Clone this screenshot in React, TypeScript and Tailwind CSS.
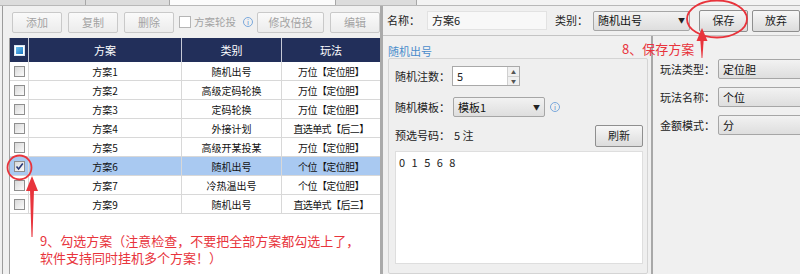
import React from 'react';

const rows = [
  { name: '方案1', type: '随机出号', play: '万位【定位胆】' },
  { name: '方案2', type: '高级定码轮换', play: '万位【定位胆】' },
  { name: '方案3', type: '定码轮换', play: '万位【定位胆】' },
  { name: '方案4', type: '外接计划', play: '直选单式【后二】' },
  { name: '方案5', type: '高级开某投某', play: '万位【定位胆】' },
  { name: '方案6', type: '随机出号', play: '个位【定位胆】', selected: true },
  { name: '方案7', type: '冷热温出号', play: '个位【定位胆】' },
  { name: '方案9', type: '随机出号', play: '直选单式【后三】' },
];

function Box({ checked, header }: { checked?: boolean; header?: boolean }) {
  if (header) {
    return (
      <span className="flex h-[11px] w-[11px] items-center justify-center border border-[#d8e6f2] bg-white">
        <span className="h-[7px] w-[7px] bg-linear-to-br from-[#6cc2f0] to-[#1a78c2]" />
      </span>
    );
  }
  return (
    <span className="flex h-[11px] w-[11px] items-center justify-center border border-[#8f8f8f] bg-linear-to-br from-[#d9d9d9] to-[#fbfbfb]">
      {checked && (
        <svg width="9" height="9" viewBox="0 0 9 9">
          <path d="M1.5 4.5 L3.6 7 L7.8 1.5" fill="none" stroke="#2a3a7a" strokeWidth="1.6" />
        </svg>
      )}
    </span>
  );
}

function ToolBtn({ label, w }: { label: string; w: string }) {
  return (
    <button className={`${w} h-[21px] shrink-0 whitespace-nowrap rounded-[2px] border border-[#c9c9c9] bg-linear-to-b from-[#fafafa] to-[#ececec] text-[11px] text-[#a3a3a3]`}>
      {label}
    </button>
  );
}

function Btn({ label, w }: { label: string; w: string }) {
  return (
    <button className={`${w} h-[22px] shrink-0 rounded-[2px] border border-[#8f8f8f] bg-linear-to-b from-[#f7f7f7] to-[#dcdcdc] text-[11px] text-[#222]`}>
      {label}
    </button>
  );
}

function Select({ value, w, arrow = true }: { value: string; w: string; arrow?: boolean }) {
  return (
    <div className={`${w} flex h-[20px] shrink-0 items-center justify-between rounded-[2px] border border-[#a6a6a6] bg-linear-to-b from-[#f2f2f2] to-[#dedede] pl-[4px] pr-[4px] text-[11px] text-[#111]`}>
      <span>{value}</span>
      {arrow && <span className="text-[7px] text-[#222]">▼</span>}
    </div>
  );
}

function Info() {
  return (
    <span className="flex h-[10px] w-[10px] shrink-0 items-center justify-center rounded-full border border-[#7aa8dc] text-[7px] leading-none text-[#5a8fd0]">
      i
    </span>
  );
}

export default function App() {
  return (
    <div className="relative h-[274px] w-[800px] overflow-hidden bg-[#f0f0f0] font-['Microsoft_YaHei','Noto_Sans_CJK_SC',sans-serif] text-[#222]">
      {/* tabs */}
      <div className="flex h-[6px] border-b border-[#b8b8b8]">
        <div className="w-[86px] border-r border-[#a8a8a8] bg-[#dcdcdc]" />
        <div className="w-[84px] border-r border-[#a8a8a8] bg-[#dcdcdc]" />
        <div className="w-[166px] border-r border-[#a8a8a8] bg-[#fbfbfb]" />
        <div className="w-[81px] border-r border-[#a8a8a8] bg-[#dcdcdc]" />
        <div className="flex-1 bg-[#f3f3f3]" />
      </div>

      <div className="flex h-[268px]">
        {/* left panel */}
        <div className="flex w-[380px] shrink-0 flex-col pl-[2px]">
          <div className="flex h-full flex-col border-l border-[#9c9c9c] pl-[6px]">
            <div className="flex h-[32px] items-center pl-[3px]">
              <ToolBtn label="添加" w="w-[50px]" />
              <ToolBtn label="复制" w="w-[50px] ml-[6px]" />
              <ToolBtn label="删除" w="w-[50px] ml-[6px]" />
              <span className="ml-[5px] h-[12px] w-[12px] shrink-0 border border-[#b5b5b5] bg-white" />
              <span className="ml-[3px] shrink-0 whitespace-nowrap text-[10.5px] text-[#a3a3a3]">方案轮投</span>
              <span className="ml-[7px]">
                <Info />
              </span>
              <ToolBtn label="修改倍投" w="w-[67px] ml-[4px]" />
              <ToolBtn label="编辑" w="w-[50px] ml-[6px]" />
            </div>

            <div className="flex-1 border-l border-[#a0a0a0] bg-white">
              <div className="flex h-[24px] bg-[#222f5a] text-[11px] text-white">
                <div className="flex w-[19px] shrink-0 items-center justify-center border-r border-[#c5c9d6]">
                  <Box header />
                </div>
                <div className="flex w-[153px] shrink-0 items-center justify-center border-r border-[#c5c9d6]">方案</div>
                <div className="flex w-[100px] shrink-0 items-center justify-center border-r border-[#c5c9d6]">类别</div>
                <div className="flex flex-1 items-center justify-center">玩法</div>
              </div>
              {rows.map((r) => (
                <div
                  key={r.name}
                  className={`flex h-[19px] border-b border-[#d8d8d8] text-[10px] text-[#111] ${r.selected ? 'bg-[#a9c9f1]' : 'bg-white'}`}
                >
                  <div className="flex w-[19px] shrink-0 items-center justify-center border-r border-[#d8d8d8]">
                    <Box checked={r.selected} />
                  </div>
                  <div className="flex w-[153px] shrink-0 items-center justify-center border-r border-[#d8d8d8]">{r.name}</div>
                  <div className="flex w-[100px] shrink-0 items-center justify-center border-r border-[#d8d8d8]">{r.type}</div>
                  <div className="flex flex-1 items-center justify-center whitespace-nowrap tracking-[-0.6px]">{r.play}</div>
                </div>
              ))}
            </div>
          </div>
        </div>

        {/* right panel */}
        <div className="flex min-w-0 flex-1 flex-col border-l-[3px] border-[#aaaaaa]">
          <div className="flex h-[30px] items-center border-b border-[#c4c4c4] pl-[4px] text-[11px]">
            <span className="w-[40px] shrink-0">名称：</span>
            <div className="flex h-[19px] w-[120px] shrink-0 items-center border border-[#e2e2e2] bg-[#f8f8f8] pl-[4px]">方案6</div>
            <span className="ml-[8px] w-[38px] shrink-0">类别：</span>
            <Select value="随机出号" w="w-[97px]" />
            <div className="ml-[9px] flex gap-[4px]">
              <Btn label="保存" w="w-[49px]" />
              <Btn label="放弃" w="w-[48px]" />
            </div>
          </div>

          <div className="flex flex-1">
            <div className="flex w-[268px] shrink-0 flex-col pl-[5px] pr-[3px]">
              <div className="mt-[8px] h-[14px] text-[11px] leading-[14px] text-[#4a8ccb]">随机出号</div>
              <div className="flex flex-1 flex-col rounded-[2px] border border-[#d4d4d4] bg-[#efefef] pl-[6px] pr-[4px] pt-[7px] text-[11px]">
                <div className="flex h-[20px] items-center">
                  <span className="w-[57px]">随机注数：</span>
                  <div className="flex h-[20px] w-[68px] items-center justify-between border border-[#a9a9a9] bg-white pl-[4px]">
                    <span>5</span>
                    <div className="flex h-full w-[12px] flex-col border-l border-[#d0d0d0]">
                      <span className="flex flex-1 items-center justify-center border-b border-[#d0d0d0] bg-[#f0f0f0] text-[5px] leading-none text-[#555]">▲</span>
                      <span className="flex flex-1 items-center justify-center bg-[#f0f0f0] text-[5px] leading-none text-[#555]">▼</span>
                    </div>
                  </div>
                </div>
                <div className="mt-[11px] flex h-[20px] items-center">
                  <span className="w-[58px]">随机模板：</span>
                  <Select value="模板1" w="w-[92px]" />
                  <span className="ml-[5px]">
                    <Info />
                  </span>
                </div>
                <div className="mt-[9px] flex h-[19px] items-center">
                  <span className="w-[59px]">预选号码：</span>
                  <span>5 注</span>
                  <div className="ml-auto">
                    <Btn label="刷新" w="w-[48px] h-[19px]" />
                  </div>
                </div>
                <div className="mt-[6px] h-[113px] border border-[#dedede] bg-white pl-[3px] pt-[2px] text-[11px] tracking-[2px]">
                  0 1 5 6 8
                </div>
              </div>
            </div>
            <div className="w-[2px] shrink-0 bg-[#a8a8a8]" />
            <div className="flex flex-1 flex-col gap-[8px] pl-[7px] pt-[23px] text-[11px]">
              <div className="flex h-[20px] items-center">
                <span className="w-[58px] shrink-0">玩法类型：</span>
                <Select value="定位胆" w="w-[100px]" arrow={false} />
              </div>
              <div className="flex h-[20px] items-center">
                <span className="w-[58px] shrink-0">玩法名称：</span>
                <Select value="个位" w="w-[100px]" arrow={false} />
              </div>
              <div className="flex h-[20px] items-center">
                <span className="w-[58px] shrink-0">金额模式：</span>
                <Select value="分" w="w-[100px]" arrow={false} />
              </div>
            </div>
          </div>
        </div>
      </div>

      {/* annotations */}
      <svg className="pointer-events-none absolute left-0 top-0" width="800" height="274">
        <ellipse cx="717" cy="19" rx="30" ry="18.5" fill="none" stroke="#e8343c" strokeWidth="1.8" />
        <polygon points="702,28 696.5,41 707.5,41" fill="#e8343c" />
        <polygon points="700.3,40 703.7,40 702.4,58 701.6,58" fill="#e8343c" />
        <circle cx="19.5" cy="167.5" r="12" fill="none" stroke="#e8343c" strokeWidth="1.8" />
        <polygon points="32,176 26,191 38,191" fill="#e8343c" />
        <polygon points="30,190 34,190 32.5,237 31.5,237" fill="#e8343c" />
      </svg>
      <div className="absolute left-[622px] top-[40px] whitespace-nowrap text-[13px] leading-[17px] text-[#e8343c]">8、保存方案</div>
      <div className="absolute left-[40px] top-[232px] w-[324px] text-[13px] leading-[17px] text-[#e8343c]">
        9、勾选方案（注意检查，不要把全部方案都勾选上了，软件支持同时挂机多个方案！）
      </div>
    </div>
  );
}
